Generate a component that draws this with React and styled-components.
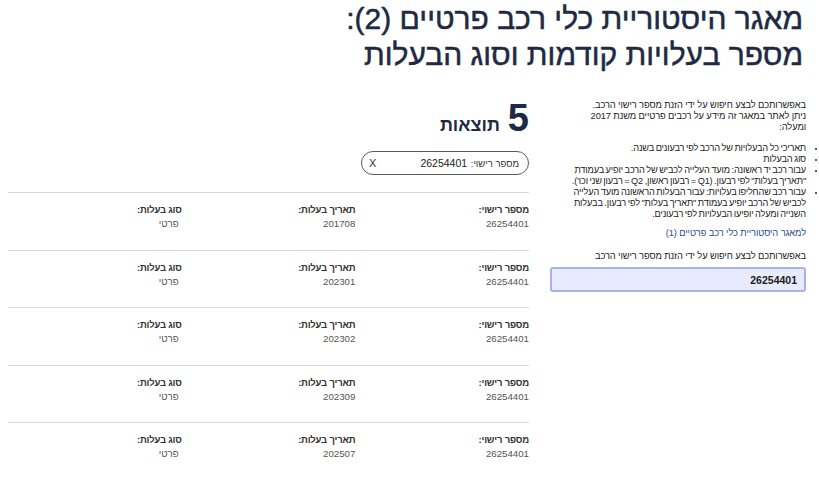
import React from 'react'
import styled, { createGlobalStyle } from 'styled-components'

const GlobalStyle = createGlobalStyle`
  html, body {
    margin: 0;
    padding: 0;
    background: #ffffff;
  }
  body {
    font-family: "Liberation Sans", Arial, sans-serif;
    color: #333333;
  }
`

const Page = styled.main`
  direction: rtl;
  width: 819px;
  padding: 0 13px 0 8px;
  box-sizing: border-box;
`

const Title = styled.h1`
  margin: 1px 3px 0 0;
  font-family: "Liberation Sans", Arial, sans-serif;
  font-weight: 400;
  font-size: 30px;
  line-height: 36px;
  color: #1e2a42;
  -webkit-text-stroke: 0.5px #1e2a42;
`

const Content = styled.div`
  display: flex;
  gap: 21px;
  margin-top: 25px;
`

const Sidebar = styled.aside`
  width: 256px;
  flex-shrink: 0;
  padding-top: 2px;
  font-size: 9.3px;
  line-height: 11px;
  letter-spacing: -0.1px;
  color: #222222;
`

const Intro = styled.p`
  margin: 0 0 10px;
`

const Bullets = styled.ul`
  margin: 0 0 8px;
  padding: 0;
  list-style: disc outside;
  font-size: 9.2px;
  letter-spacing: -0.15px;
  word-spacing: -0.8px;

  li::marker {
    font-size: 8px;
  }
`

const HistoryLink = styled.a`
  display: block;
  color: #2b4a8c;
  text-decoration: none;
  margin-bottom: 12px;
`

const SearchLabel = styled.label`
  display: block;
  margin-bottom: 5px;
`

const SearchInput = styled.input`
  display: block;
  width: 100%;
  height: 25px;
  box-sizing: border-box;
  direction: rtl;
  padding: 0 7px;
  border: 2px solid #a9b2e6;
  border-radius: 3px;
  background: #e8ebfc;
  font-family: "Liberation Sans", Arial, sans-serif;
  font-size: 10.5px;
  font-weight: 700;
  color: #1b1b1b;
  outline: none;
`

const Results = styled.section`
  flex: 1;
  min-width: 0;
`

const Count = styled.h2`
  margin: 0;
  display: flex;
  align-items: baseline;
  gap: 8px;
  color: #1e2a42;
  font-weight: 700;
  height: 40px;
  line-height: 40px;
`

const CountNumber = styled.span`
  font-size: 38px;
`

const CountWord = styled.span`
  font-size: 18px;
`

const ChipRow = styled.div`
  display: flex;
  margin-top: 13px;
  margin-bottom: 17px;
`

const Chip = styled.div`
  display: flex;
  align-items: center;
  justify-content: space-between;
  width: 168px;
  height: 24px;
  box-sizing: border-box;
  padding: 0 9px 0 7px;
  border: 1px solid #5a5a5a;
  border-radius: 12px;
  font-size: 9.5px;
  color: #333333;
`

const ChipValue = styled.span`
  font-size: 10.5px;
  color: #222222;
  margin-right: 1px;
`

const ChipClose = styled.button`
  border: none;
  background: none;
  padding: 0;
  font-family: "Liberation Sans", Arial, sans-serif;
  font-size: 11px;
  color: #333333;
  cursor: pointer;
`

const List = styled.div`
  border-top: 1px solid #dadada;
`

const Row = styled.div`
  display: grid;
  grid-template-columns: repeat(3, 1fr);
  padding: 10px 0 18.5px;
  border-bottom: 1px solid #dadada;
`

const Field = styled.div`
  display: flex;
  flex-direction: column;
`

const FieldLabel = styled.span`
  font-size: 9.5px;
  line-height: 14px;
  font-weight: 700;
  letter-spacing: -0.2px;
  color: #333333;
`

const FieldValue = styled.span`
  font-size: 9.7px;
  line-height: 14px;
  color: #555555;
  padding-right: ${p => p.$indent || 0}px;
`

const rows = ['201708', '202301', '202302', '202309', '202507']

export default function App() {
  return (
    <>
      <GlobalStyle />
      <Page>
        <Title>
          מאגר היסטוריית כלי רכב פרטיים (2):
          <br />
          מספר בעלויות קודמות וסוג הבעלות
        </Title>
        <Content>
          <Sidebar>
            <Intro>
              באפשרותכם לבצע חיפוש על ידי הזנת מספר רישוי הרכב.
              <br />
              ניתן לאתר במאגר זה מידע על רכבים פרטיים משנת 2017
              <br />
              ומעלה:
            </Intro>
            <Bullets>
              <li>תאריכי כל הבעלויות של הרכב לפי רבעונים בשנה.</li>
              <li>סוג הבעלות</li>
              <li>
                עבור רכב יד ראשונה: מועד העלייה לכביש של הרכב יופיע בעמודת
                <br />
                "תאריך בעלות" לפי רבעון. (Q1 = רבעון ראשון, Q2 = רבעון שני וכו').
              </li>
              <li>
                עבור רכב שהחליפו בעלויות: עבור הבעלות הראשונה מועד העלייה
                <br />
                לכביש של הרכב יופיע בעמודת "תאריך בעלות" לפי רבעון. בבעלות
                <br />
                השנייה ומעלה יופיעו הבעלויות לפי רבעונים.
              </li>
            </Bullets>
            <HistoryLink href="#">למאגר היסטוריית כלי רכב פרטיים (1)</HistoryLink>
            <SearchLabel htmlFor="plate">
              באפשרותכם לבצע חיפוש על ידי הזנת מספר רישוי הרכב
            </SearchLabel>
            <SearchInput id="plate" defaultValue="26254401" />
          </Sidebar>
          <Results>
            <Count>
              <CountNumber>5</CountNumber>
              <CountWord>תוצאות</CountWord>
            </Count>
            <ChipRow>
              <Chip>
                <span>
                  מספר רישוי: <ChipValue>26254401</ChipValue>
                </span>
                <ChipClose>X</ChipClose>
              </Chip>
            </ChipRow>
            <List>
              {rows.map(date => (
                <Row key={date}>
                  <Field>
                    <FieldLabel>מספר רישוי:</FieldLabel>
                    <FieldValue>26254401</FieldValue>
                  </Field>
                  <Field>
                    <FieldLabel>תאריך בעלות:</FieldLabel>
                    <FieldValue>{date}</FieldValue>
                  </Field>
                  <Field>
                    <FieldLabel>סוג בעלות:</FieldLabel>
                    <FieldValue $indent={3}>פרטי</FieldValue>
                  </Field>
                </Row>
              ))}
            </List>
          </Results>
        </Content>
      </Page>
    </>
  )
}
